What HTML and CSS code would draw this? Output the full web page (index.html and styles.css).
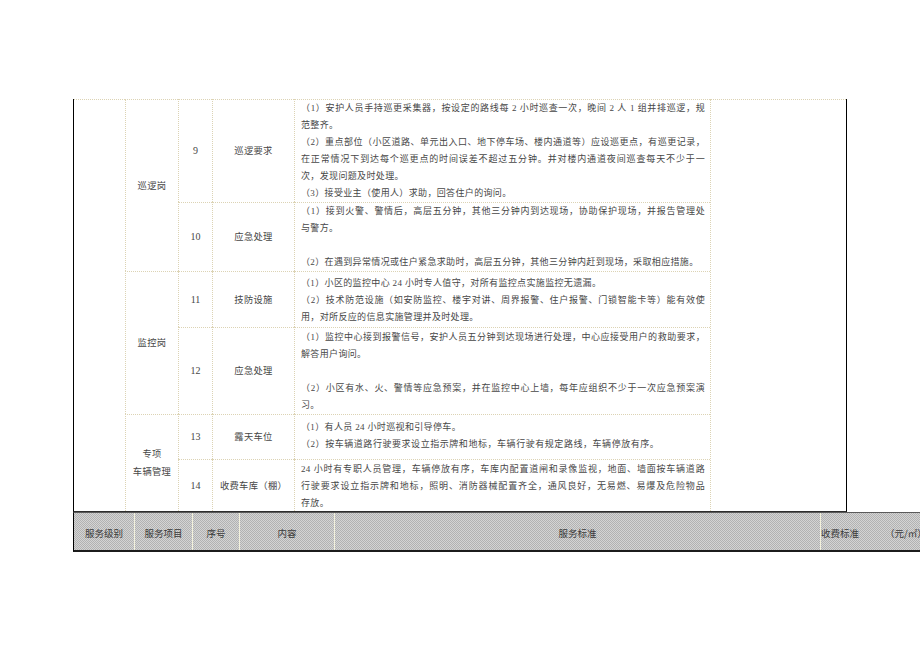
FILE: index.html
```html
<!DOCTYPE html>
<html lang="zh-CN">
<head>
<meta charset="utf-8">
<title>服务标准</title>
<link rel="stylesheet" href="styles.css">
</head>
<body>
<div class="page">
  <div class="tbl">
    <div class="cell c-edge"></div>

    <div class="cell c-grp g1">巡逻岗</div>
    <div class="cell c-num r1">9</div>
    <div class="cell c-item r1">巡逻要求</div>
    <div class="cell c-text r1 pt0">
      <div class="ln f">（1）安护人员手持巡更采集器，按设定的路线每 2 小时巡查一次，晚间 2 人 1 组并排巡逻，规</div>
      <div class="ln">范整齐。</div>
      <div class="ln f">（2）重点部位（小区道路、单元出入口、地下停车场、楼内通道等）应设巡更点，有巡更记录，</div>
      <div class="ln f">在正常情况下到达每个巡更点的时间误差不超过五分钟。并对楼内通道夜间巡查每天不少于一</div>
      <div class="ln">次，发现问题及时处理。</div>
      <div class="ln">（3）接受业主（使用人）求助，回答住户的询问。</div>
    </div>

    <div class="cell c-side"></div>

    <div class="cell c-num r2">10</div>
    <div class="cell c-item r2">应急处理</div>
    <div class="cell c-text r2 pt0">
      <div class="ln f">（1）接到火警、警情后，高层五分钟，其他三分钟内到达现场，协助保护现场，并报告管理处</div>
      <div class="ln">与警方。</div>
      <div class="ln">&nbsp;</div>
      <div class="ln">（2）在遇到异常情况或住户紧急求助时，高层五分钟，其他三分钟内赶到现场，采取相应措施。</div>
    </div>

    <div class="cell c-grp g2">监控岗</div>
    <div class="cell c-num r3">11</div>
    <div class="cell c-item r3">技防设施</div>
    <div class="cell c-text r3 pt3">
      <div class="ln">（1）小区的监控中心 24 小时专人值守，对所有监控点实施监控无遗漏。</div>
      <div class="ln f">（2）技术防范设施（如安防监控、楼宇对讲、周界报警、住户报警、门锁智能卡等）能有效使</div>
      <div class="ln">用，对所反应的信息实施管理并及时处理。</div>
    </div>

    <div class="cell c-num r4">12</div>
    <div class="cell c-item r4">应急处理</div>
    <div class="cell c-text r4 pt1">
      <div class="ln f">（1）监控中心接到报警信号，安护人员五分钟到达现场进行处理，中心应接受用户的救助要求，</div>
      <div class="ln">解答用户询问。</div>
      <div class="ln">&nbsp;</div>
      <div class="ln f">（2）小区有水、火、警情等应急预案，并在监控中心上墙，每年应组织不少于一次应急预案演</div>
      <div class="ln">习。</div>
    </div>

    <div class="cell c-grp g3">专项<br>车辆管理</div>
    <div class="cell c-num r5">13</div>
    <div class="cell c-item r5">露天车位</div>
    <div class="cell c-text r5 pt4">
      <div class="ln">（1）有人员 24 小时巡视和引导停车。</div>
      <div class="ln wide">（2）按车辆道路行驶要求设立指示牌和地标，车辆行驶有规定路线，车辆停放有序。</div>
    </div>

    <div class="cell c-num r6">14</div>
    <div class="cell c-item r6">收费车库（棚）</div>
    <div class="cell c-text r6 pt1">
      <div class="ln f">24 小时有专职人员管理，车辆停放有序，车库内配置道闸和录像监视，地面、墙面按车辆道路</div>
      <div class="ln f">行驶要求设立指示牌和地标，照明、消防器械配置齐全，通风良好，无易燃、易爆及危险物品</div>
      <div class="ln">存放。</div>
    </div>
  </div>

  <div class="hdr">
    <div class="hc">服务级别</div>
    <div class="hc hd">服务项目</div>
    <div class="hc hd">序号</div>
    <div class="hc hd">内容</div>
    <div class="hc hd">服务标准</div>
    <div class="hc hd h-fee">收费标准<span class="unit">（元/㎡）</span></div>
  </div>
</div>
</body>
</html>
```

FILE: styles.css
```css
* { box-sizing: border-box; }

html, body {
  margin: 0;
  padding: 0;
  background: #ffffff;
}

body {
  width: 920px;
  height: 651px;
  overflow: hidden;
  font-family: "Liberation Serif", "Noto Sans CJK SC", serif;
  color: #474747;
}

.page {
  padding: 99px 0 0 73px;
}

.tbl {
  display: grid;
  grid-template-columns: 51px 53px 34px 82px 416px 136px;
  grid-template-rows: 103px 69px 56px 87px 45px 52px;
  width: 774px;
  border-left: 1px solid #000000;
  border-right: 1px solid #000000;
  border-bottom: 1px solid #2e2e2e;
}

.cell {
  border-top: 1px dotted #dcd3b4;
  border-left: 1px dotted #dcd3b4;
  font-size: 9px;
  letter-spacing: 0.35px;
  min-width: 0;
  overflow: hidden;
}

.c-edge {
  grid-column: 1;
  grid-row: 1 / 7;
  border-left: 0;
}

.c-side {
  grid-column: 6;
  grid-row: 1 / 7;
}

.c-grp,
.c-num,
.c-item {
  display: flex;
  align-items: center;
  justify-content: center;
  text-align: center;
  font-size: 9.3px;
  letter-spacing: 0.3px;
  line-height: 18px;
}

.c-grp { grid-column: 2; }
.c-num { grid-column: 3; font-size: 10px; letter-spacing: 0; }
.c-item { grid-column: 4; }
.c-text { grid-column: 5; padding: 0 5px 0 6px; line-height: 17px; }

.g1 { grid-row: 1 / 3; }
.g2 { grid-row: 3 / 5; }
.g3 { grid-row: 5 / 7; }

.r1 { grid-row: 1; }
.r2 { grid-row: 2; }
.r3 { grid-row: 3; }
.r4 { grid-row: 4; }
.r5 { grid-row: 5; }
.r6 { grid-row: 6; }

.pt0 { padding-top: 0; }
.pt1 { padding-top: 1px; }
.pt3 { padding-top: 3px; }
.pt4 { padding-top: 4px; }

.ln {
  height: 17px;
  white-space: nowrap;
}

.ln.f {
  white-space: normal;
  text-align: justify;
  text-align-last: justify;
}

.ln.wide {
  letter-spacing: 0.55px;
}

.hdr {
  display: grid;
  grid-template-columns: 60px 58px 47px 95px 486px 1fr;
  width: 847px;
  height: 40px;
  border-top: 1px solid #5a5a5a;
  border-left: 1px solid #000000;
  border-bottom: 2px solid #1c1c1c;
  background: repeating-conic-gradient(#b2b2b2 0 25%, #d4d4d4 0 50%) 0 0 / 2px 2px;
  font-family: "Noto Sans CJK SC", sans-serif;
  font-size: 9.5px;
  color: #3a3a3a;
  overflow: hidden;
}

.hc {
  display: flex;
  align-items: center;
  justify-content: center;
  padding-top: 3px;
  white-space: nowrap;
  min-width: 0;
}

.hd {
  border-left: 1px solid #f3f1dc;
}

.h-fee {
  justify-content: flex-start;
  overflow: hidden;
}

.unit {
  margin-left: 26px;
}
```
